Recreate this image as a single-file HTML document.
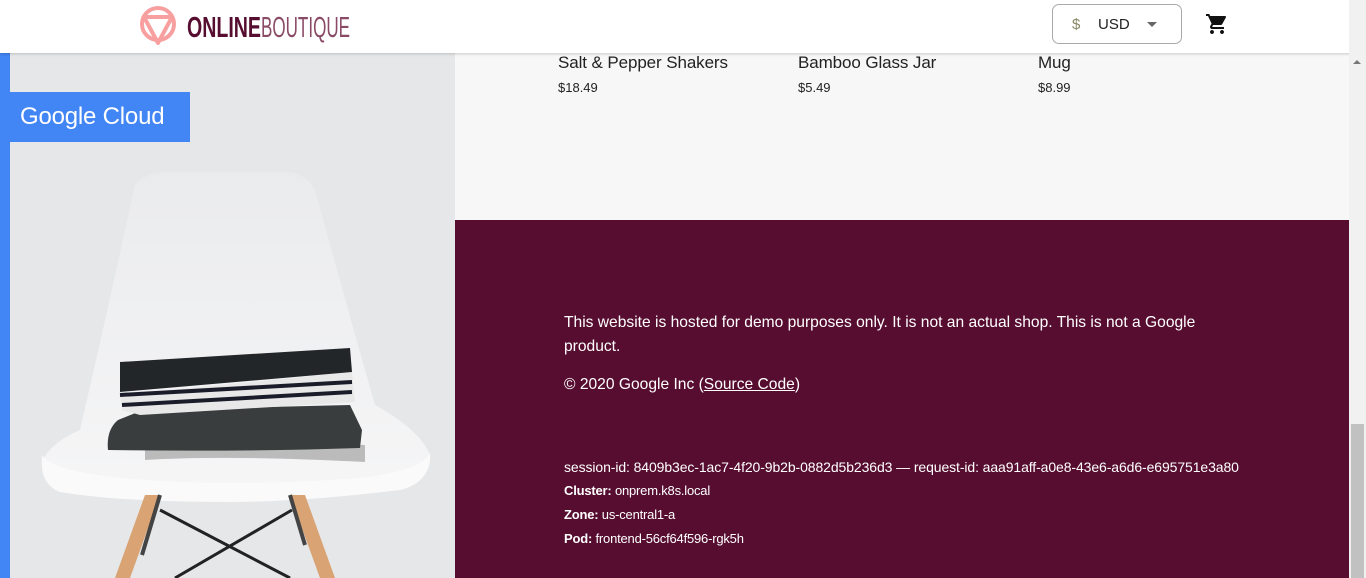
<!DOCTYPE html>
<html><head><meta charset="utf-8"><style>
*{margin:0;padding:0;box-sizing:border-box}
body{width:1366px;height:578px;overflow:hidden;position:relative;background:#f7f7f7;font-family:"Liberation Sans",sans-serif}
.blue{position:absolute;left:0;top:0;width:10px;height:578px;background:#4285f4}
.img{position:absolute;left:10px;top:0;width:445px;height:578px;background:#e6e7e9;overflow:hidden}
.gc{position:absolute;left:10px;top:92px;width:180px;height:50px;background:#4285f4;color:#fff;font-size:24px;line-height:50px;padding-left:10px;letter-spacing:-0.2px}
.hdr{position:absolute;left:0;top:0;width:1366px;height:53px;background:#fff;box-shadow:0 1px 3px rgba(0,0,0,.18)}
.logo{position:absolute;left:139px;top:5px}
.cur{position:absolute;left:1052px;top:4px;width:130px;height:40px;border:1px solid #aaa;border-radius:7px;font-size:15px;color:#222}
.p{position:absolute;font-size:17px;color:#222;letter-spacing:-.1px}
.pr{position:absolute;font-size:13px;color:#222}
.foot{position:absolute;left:455px;top:220px;width:894px;height:358px;background:#560d30;color:#fff}
.foot div{position:absolute;left:109px;white-space:nowrap}
.sb{position:absolute;left:1349px;top:0;width:17px;height:578px;background:#f1f1f1}
.th{position:absolute;left:2px;top:424px;width:13px;height:154px;background:#c1c1c1}
</style></head><body>
<div class="blue"></div>
<div class="img">
<svg width="445" height="578" viewBox="10 0 445 578">
<defs><linearGradient id="g" x1="0" y1="0" x2="0" y2="1"><stop offset="0" stop-color="#eaebed"/><stop offset="1" stop-color="#f6f6f7"/></linearGradient></defs>
<path d="M135 185 Q145 172 170 172 L285 172 Q305 172 315 190 Q345 300 375 405 Q420 430 430 455 Q432 480 400 488 Q300 500 230 500 Q120 500 60 490 Q40 485 42 460 Q55 440 80 430 Q110 300 135 185Z" fill="url(#g)"/>
<path d="M42 455 Q50 470 120 478 Q230 488 360 478 Q425 470 430 452 Q432 482 400 490 Q300 502 230 502 Q120 502 60 492 Q40 485 42 455Z" fill="#fafafa"/>
<path d="M145 495 L160 495 L130 578 L115 578Z" fill="#d9a374"/>
<path d="M290 495 L305 495 L335 578 L320 578Z" fill="#d9a374"/>
<path d="M160 510 L290 578 M292 510 L175 578" stroke="#222" stroke-width="3"/>
<path d="M160 495 L142 555 M290 495 L305 545" stroke="#444" stroke-width="4"/>
<path d="M145 460 Q230 455 365 462 L365 445 Q240 440 145 448Z" fill="#bbb"/>
<path d="M108 450 Q106 430 118 420 L143 410 L350 405 L362 430 L360 448 Q240 452 108 450Z" fill="#3a3d3e"/>
<path d="M120 395 L352 372 L355 402 L140 415 L122 410Z" fill="#e8e8e8"/>
<path d="M120 395 L352 382 M122 405 L352 392" stroke="#1a1c2a" stroke-width="4"/>
<path d="M120 362 L350 348 L352 372 L120 392Z" fill="#222628"/>
</svg>
</div>
<div class="gc">Google Cloud</div>
<div class="hdr">
<svg class="logo" width="215" height="40" viewBox="0 0 215 40">
<circle cx="19" cy="19" r="16" fill="none" stroke="#f8a0a0" stroke-width="4"/>
<path d="M5 12 L33 12 L19 38Z" fill="none" stroke="#f8a0a0" stroke-width="4" stroke-linejoin="round"/>
<text x="48" y="32" font-family="Liberation Sans" font-weight="bold" font-size="29" fill="#560d30" textLength="74" lengthAdjust="spacingAndGlyphs">ONLINE</text>
<text x="122" y="32" font-family="Liberation Sans" font-size="29" fill="#8a4a66" textLength="89" lengthAdjust="spacingAndGlyphs">BOUTIQUE</text>
</svg>
<div class="cur"><span style="position:absolute;left:19px;top:11px;color:#886">$</span><span style="position:absolute;left:45px;top:11px">USD</span><span style="position:absolute;left:94px;top:17px;border:5px solid transparent;border-top-color:#666;border-bottom:0"></span></div>
<svg style="position:absolute;left:1205px;top:12px" width="24" height="24" viewBox="0 0 24 24"><path d="M7 18c-1.1 0-2 .9-2 2s.9 2 2 2 2-.9 2-2-.9-2-2-2zM1 2v2h2l3.6 7.59-1.35 2.45c-.16.28-.25.61-.25.96 0 1.1.9 2 2 2h12v-2H7.42c-.14 0-.25-.11-.25-.25l.03-.12.9-1.63h7.45c.75 0 1.41-.41 1.75-1.03l3.58-6.49A1 1 0 0 0 20 4H5.21l-.94-2H1zm16 16c-1.1 0-2 .9-2 2s.9 2 2 2 2-.9 2-2-.9-2-2-2z" fill="#111"/></svg>
</div>
<div class="p" style="left:558px;top:53px">Salt &amp; Pepper Shakers</div>
<div class="pr" style="left:558px;top:80px">$18.49</div>
<div class="p" style="left:798px;top:53px">Bamboo Glass Jar</div>
<div class="pr" style="left:798px;top:80px">$5.49</div>
<div class="p" style="left:1038px;top:53px">Mug</div>
<div class="pr" style="left:1038px;top:80px">$8.99</div>
<div class="foot">
<div style="top:91px;font-size:15.6px;line-height:24px;white-space:normal;width:675px">This website is hosted for demo purposes only. It is not an actual shop. This is not a Google product.</div>
<div style="top:156px;font-size:15.6px">© 2020 Google Inc (<u>Source Code</u>)</div>
<div style="top:239px;font-size:14px;letter-spacing:-.1px">session-id: 8409b3ec-1ac7-4f20-9b2b-0882d5b236d3 — request-id: aaa91aff-a0e8-43e6-a6d6-e695751e3a80</div>
<div style="top:263px;font-size:13px;letter-spacing:-.2px"><b>Cluster:</b> onprem.k8s.local</div>
<div style="top:287px;font-size:13px;letter-spacing:-.2px"><b>Zone:</b> us-central1-a</div>
<div style="top:311px;font-size:13px;letter-spacing:-.2px"><b>Pod:</b> frontend-56cf64f596-rgk5h</div>
</div>
<div class="sb"><div class="th"></div><span style="position:absolute;left:4px;top:60px;border:4px solid transparent;border-bottom-color:#777;border-top:0"></span></div>
</body></html>
